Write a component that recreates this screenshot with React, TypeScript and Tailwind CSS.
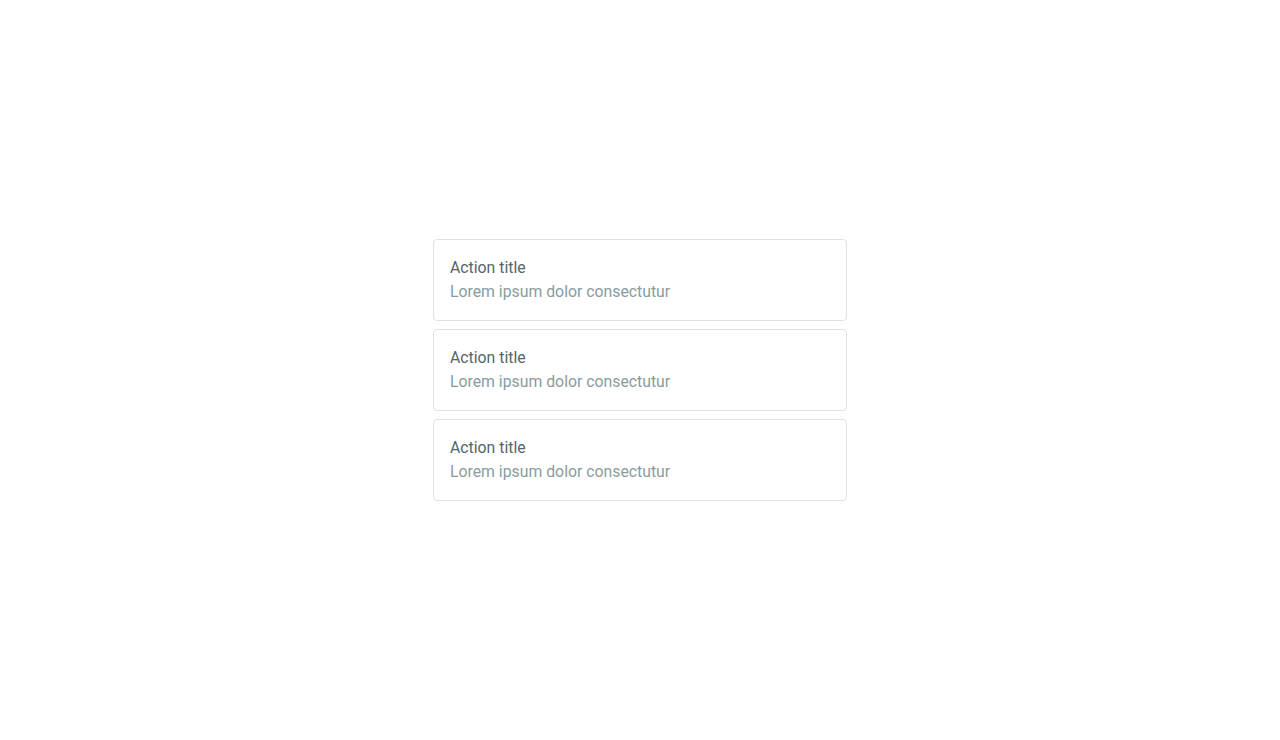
export default function App() {
  const items = [0, 1, 2];
  return (
    <div className="flex h-[740px] w-full items-center justify-center bg-white" style={{ fontFamily: "Roboto, sans-serif" }}>
      <div className="flex w-[414px] flex-col gap-2">
        {items.map((i) => (
          <div key={i} className="rounded border border-[#dee2e6] bg-white p-4">
            <div className="text-[15.8px] leading-6 text-[#56656a]">Action title</div>
            <div className="text-[15.8px] leading-6 text-[#8a9ba0]">Lorem ipsum dolor consectutur</div>
          </div>
        ))}
      </div>
    </div>
  );
}
